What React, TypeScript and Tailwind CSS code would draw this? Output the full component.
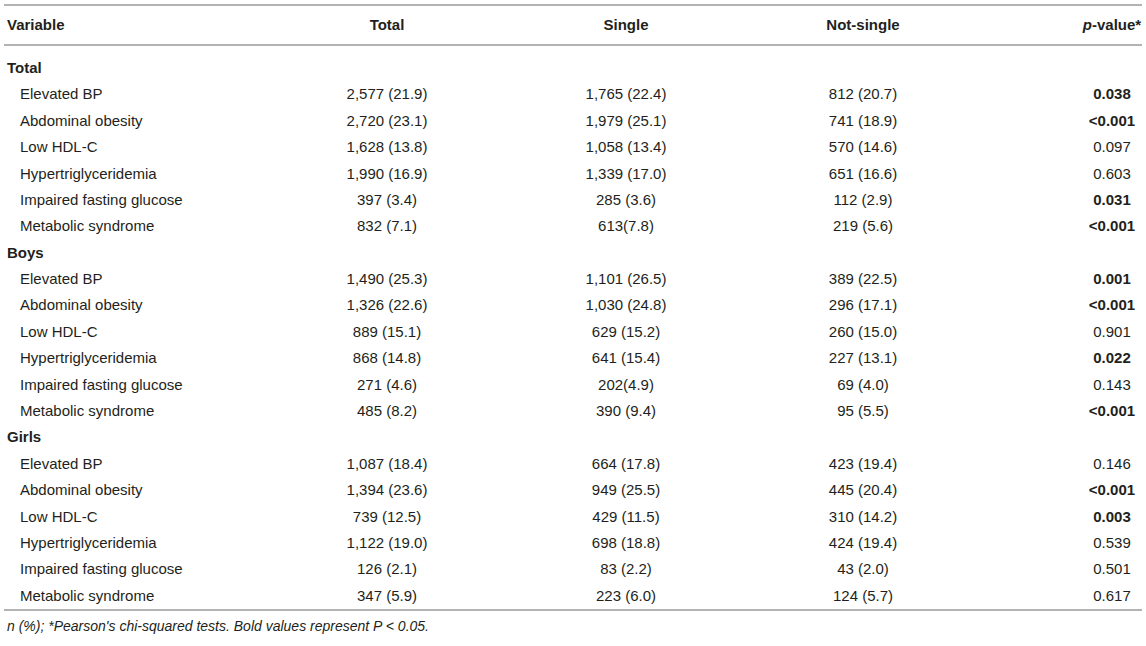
const HEAD = ["Variable", "Total", "Single", "Not-single"];

type Row = [string, string, string, string, string, boolean];

const SECTIONS: { title: string; rows: Row[] }[] = [
  {
    title: "Total",
    rows: [
      ["Elevated BP", "2,577 (21.9)", "1,765 (22.4)", "812 (20.7)", "0.038", true],
      ["Abdominal obesity", "2,720 (23.1)", "1,979 (25.1)", "741 (18.9)", "<0.001", true],
      ["Low HDL-C", "1,628 (13.8)", "1,058 (13.4)", "570 (14.6)", "0.097", false],
      ["Hypertriglyceridemia", "1,990 (16.9)", "1,339 (17.0)", "651 (16.6)", "0.603", false],
      ["Impaired fasting glucose", "397 (3.4)", "285 (3.6)", "112 (2.9)", "0.031", true],
      ["Metabolic syndrome", "832 (7.1)", "613(7.8)", "219 (5.6)", "<0.001", true],
    ],
  },
  {
    title: "Boys",
    rows: [
      ["Elevated BP", "1,490 (25.3)", "1,101 (26.5)", "389 (22.5)", "0.001", true],
      ["Abdominal obesity", "1,326 (22.6)", "1,030 (24.8)", "296 (17.1)", "<0.001", true],
      ["Low HDL-C", "889 (15.1)", "629 (15.2)", "260 (15.0)", "0.901", false],
      ["Hypertriglyceridemia", "868 (14.8)", "641 (15.4)", "227 (13.1)", "0.022", true],
      ["Impaired fasting glucose", "271 (4.6)", "202(4.9)", "69 (4.0)", "0.143", false],
      ["Metabolic syndrome", "485 (8.2)", "390 (9.4)", "95 (5.5)", "<0.001", true],
    ],
  },
  {
    title: "Girls",
    rows: [
      ["Elevated BP", "1,087 (18.4)", "664 (17.8)", "423 (19.4)", "0.146", false],
      ["Abdominal obesity", "1,394 (23.6)", "949 (25.5)", "445 (20.4)", "<0.001", true],
      ["Low HDL-C", "739 (12.5)", "429 (11.5)", "310 (14.2)", "0.003", true],
      ["Hypertriglyceridemia", "1,122 (19.0)", "698 (18.8)", "424 (19.4)", "0.539", false],
      ["Impaired fasting glucose", "126 (2.1)", "83 (2.2)", "43 (2.0)", "0.501", false],
      ["Metabolic syndrome", "347 (5.9)", "223 (6.0)", "124 (5.7)", "0.617", false],
    ],
  },
];

const GRID = "grid grid-cols-[261px_238px_240px_234px_1fr_60px] items-center";

export default function App() {
  return (
    <div className="w-[1146px] h-[646px] bg-white px-[4px] pt-[4px] text-[15px] text-[#231f20] font-['Liberation_Sans',Arial,sans-serif]">
      <div className="border-t-2 border-[#b3b3b3]" />
      <div className={`${GRID} h-[38px] pl-[3px] font-bold`}>
        <div>{HEAD[0]}</div>
        <div className="text-center">{HEAD[1]}</div>
        <div className="text-center">{HEAD[2]}</div>
        <div className="text-center">{HEAD[3]}</div>
        <div />
        <div className="text-center whitespace-nowrap">
          <i>p</i>-value*
        </div>
      </div>
      <div className="border-t-2 border-[#b3b3b3]" />
      <div className="pt-[9px]">
        {SECTIONS.map((s) => (
          <div key={s.title}>
            <div className="h-[26.4px] flex items-center pl-[3px] font-bold">{s.title}</div>
            {s.rows.map((r, i) => (
              <div key={i} className={`${GRID} h-[26.4px] pl-[3px]`}>
                <div className="pl-[13px]">{r[0]}</div>
                <div className="text-center">{r[1]}</div>
                <div className="text-center">{r[2]}</div>
                <div className="text-center">{r[3]}</div>
                <div />
                <div className={`text-center whitespace-nowrap ${r[5] ? "font-bold" : ""}`}>{r[4]}</div>
              </div>
            ))}
          </div>
        ))}
      </div>
      <div className="border-t-2 border-[#b3b3b3]" />
      <div className="pl-[3px] pt-[5px] italic text-[14px]">
        n (%); *Pearson's chi-squared tests. Bold values represent P &lt; 0.05.
      </div>
    </div>
  );
}
